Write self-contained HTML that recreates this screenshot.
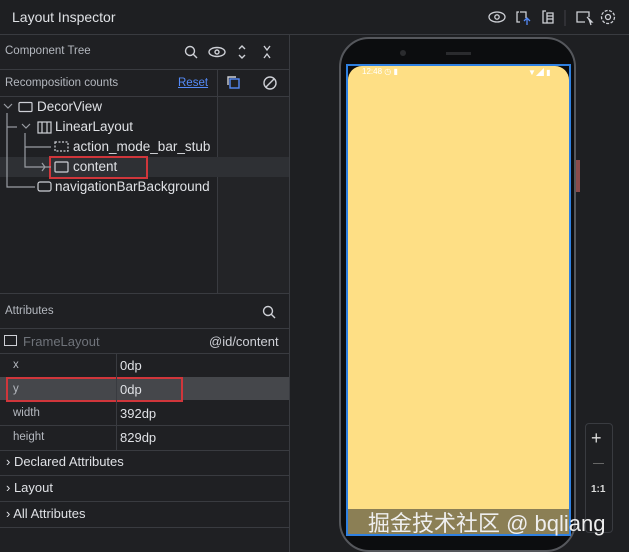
<!DOCTYPE html>
<html><head><meta charset="utf-8"><style>
*{margin:0;padding:0;box-sizing:border-box}
body{width:629px;height:552px;overflow:hidden;background:#1e1f22;font-family:"Liberation Sans","Noto Sans CJK SC",sans-serif;color:#dfe1e5;position:relative}
.a{position:absolute}
.t{font-size:13px;white-space:nowrap}
.tr{font-size:13.5px}
.s{font-size:11.5px;color:#b4b8bf;white-space:nowrap}
.ln{background:#393b40}
</style></head><body>
<div class="a" style="left:0;top:0;width:629px;height:34px;background:#1e1f22"></div>
<div class="a t" style="left:12px;top:9px;font-size:14px">Layout Inspector</div>
<div class="a ln" style="left:0;top:34px;width:629px;height:1px"></div>
<div class="a" style="left:0;top:35px;width:289px;height:517px;background:#1f2023"></div>
<div class="a ln" style="left:289px;top:35px;width:1px;height:517px"></div>
<div class="a s" style="left:5px;top:45px">Component Tree</div>
<svg class="a" style="left:180px;top:42px" width="100" height="20" fill="none" stroke="#ced0d6" stroke-width="1.4">
<circle cx="10" cy="9" r="4.5"/><path d="M13 12l4 4"/>
<ellipse cx="37" cy="10" rx="8" ry="4.5"/><circle cx="37" cy="10" r="2"/>
<path d="M59 7l3-3 3 3M59 13l3 3 3-3"/>
<path d="M84 4l3 4 3-4M84 16l3-4 3 4"/></svg>
<div class="a ln" style="left:0;top:69px;width:289px;height:1px"></div>
<div class="a s" style="left:5px;top:77px">Recomposition counts</div>
<div class="a s" style="left:178px;top:77px;color:#548af7;text-decoration:underline">Reset</div>
<div class="a ln" style="left:217px;top:70px;width:1px;height:223px"></div>
<svg class="a" style="left:225px;top:74px" width="60" height="18" fill="none" stroke-width="1.4">
<rect x="5" y="5" width="9" height="9" stroke="#548af7"/><path d="M3 11V3h8" stroke="#ced0d6"/>
<circle cx="45" cy="9" r="6" stroke="#ced0d6"/><path d="M41 13l8-8" stroke="#ced0d6"/></svg>
<div class="a ln" style="left:0;top:96px;width:289px;height:1px"></div>
<div class="a" style="left:218px;top:97px;width:71px;height:196px;background:#232427"></div>
<div class="a" style="left:0;top:157px;width:289px;height:20px;background:#2e3034"></div>
<div class="a" style="left:49px;top:156px;width:99px;height:23px;border:2px solid #d0363b"></div>
<svg class="a" style="left:0;top:97px" width="60" height="100" fill="none" stroke="#9a9da3" stroke-width="1.2">
<path d="M4 7l4 4 4-4"/><path d="M7 16v74h28"/><path d="M7 30h10"/>
<path d="M22 27l4 4 4-4"/><path d="M25 36v34h26M25 50h26"/><path d="M42 66l3 4-3 4"/>
</svg>
<svg class="a" style="left:18px;top:101px" width="200" height="92" fill="none" stroke="#ced0d6" stroke-width="1.2">
<rect x="1" y="1.5" width="13" height="9" rx="1"/>
<rect x="20" y="21" width="13" height="11"/><path d="M24 21v11M29 21v11"/>
<rect x="37" y="41" width="13" height="9" stroke-dasharray="2 1.5"/>
<rect x="37" y="61" width="13" height="10" rx="1"/>
<rect x="20" y="81" width="13" height="9" rx="2"/></svg>
<div class="a t tr" style="left:37px;top:99px">DecorView</div>
<div class="a t tr" style="left:55px;top:119px">LinearLayout</div>
<div class="a t tr" style="left:73px;top:139px">action_mode_bar_stub</div>
<div class="a t tr" style="left:73px;top:159px">content</div>
<div class="a t tr" style="left:55px;top:179px">navigationBarBackground</div>
<div class="a ln" style="left:0;top:293px;width:289px;height:1px"></div>
<div class="a s" style="left:5px;top:305px">Attributes</div>
<svg class="a" style="left:260px;top:303px" width="18" height="18" fill="none" stroke="#ced0d6" stroke-width="1.4"><circle cx="8" cy="8" r="4.5"/><path d="M11 11l4 4"/></svg>
<div class="a ln" style="left:0;top:328px;width:289px;height:1px"></div>
<div class="a" style="left:4px;top:335px;width:13px;height:11px;border:1.3px solid #ced0d6"></div>
<div class="a t" style="left:23px;top:334px;color:#6f737a">FrameLayout</div>
<div class="a t" style="left:209px;top:334px;color:#ced0d6">@id/content</div>
<div class="a ln" style="left:0;top:353px;width:289px;height:1px"></div>
<div class="a" style="left:0;top:377px;width:289px;height:23px;background:#45474b"></div>
<div class="a" style="left:6px;top:377px;width:177px;height:25px;border:2px solid #d0363b"></div>
<div class="a" style="left:116px;top:354px;width:1px;height:96px;background:#393b40"></div>
<div class="a s" style="left:13px;top:359px">x</div><div class="a t" style="left:120px;top:358px">0dp</div>
<div class="a s" style="left:13px;top:383px">y</div><div class="a t" style="left:120px;top:382px">0dp</div>
<div class="a s" style="left:13px;top:407px">width</div><div class="a t" style="left:120px;top:406px">392dp</div>
<div class="a s" style="left:13px;top:431px">height</div><div class="a t" style="left:120px;top:430px">829dp</div>
<div class="a ln" style="left:0;top:425px;width:289px;height:1px"></div>
<div class="a ln" style="left:0;top:450px;width:289px;height:1px"></div>
<div class="a t" style="left:6px;top:454px">› Declared Attributes</div>
<div class="a ln" style="left:0;top:475px;width:289px;height:1px"></div>
<div class="a t" style="left:6px;top:480px">› Layout</div>
<div class="a ln" style="left:0;top:501px;width:289px;height:1px"></div>
<div class="a t" style="left:6px;top:506px">› All Attributes</div>
<div class="a ln" style="left:0;top:527px;width:289px;height:1px"></div>
<svg class="a" style="left:487px;top:8px" width="135" height="20" fill="none" stroke="#ced0d6" stroke-width="1.3">
<ellipse cx="10" cy="9" rx="8" ry="5"/><circle cx="10" cy="9" r="2.2"/>
<path d="M32 4h-2v10h3M33 4h6v6"/><path d="M40 11v6M37 13l3-3 3 3" stroke="#548af7"/>
<path d="M59 3h-3v12h4M60 5h6v10h-6z"/><path d="M60 8h6M60 11h6"/>
<path d="M78 2v16" stroke="#393b40"/>
<path d="M98 14h-8V4h12v5"/><path d="M100 9l5 5-2 0 1 3" fill="#ced0d6"/>
<circle cx="121" cy="9" r="2.5"/><circle cx="121" cy="9" r="6.5" stroke-dasharray="3 1.5"/></svg>
<div class="a" style="left:339px;top:37px;width:237px;height:515px;border-radius:30px;background:#0c0d0f;border:2px solid #55575c"></div>
<div class="a" style="left:576px;top:160px;width:4px;height:32px;background:#8a4b4b"></div>
<div class="a" style="left:400px;top:50px;width:6px;height:6px;border-radius:3px;background:#2a2b2e"></div>
<div class="a" style="left:446px;top:52px;width:25px;height:3px;background:#2a2b2e"></div>
<div class="a" style="left:346px;top:64px;width:225px;height:472px;border:2px solid #2f80e0"></div>
<div class="a" style="left:348px;top:66px;width:221px;height:468px;background:#fedf85;border-radius:14px 14px 10px 10px"></div>
<div class="a" style="left:362px;top:67px;font-size:8px;color:#fff">12:48 ◷ ▮</div>
<div class="a" style="left:528px;top:67px;font-size:8px;color:#fff">▼◢ ▮</div>
<div class="a" style="left:348px;top:509px;width:221px;height:25px;background:#8b7f55"></div>
<div class="a" style="left:585px;top:423px;width:28px;height:110px;border:1px solid #393b40;border-radius:4px;background:#1e1f22"></div>
<div class="a" style="left:591px;top:428px;font-size:18px;color:#ddd">+</div>
<div class="a" style="left:593px;top:463px;width:11px;height:1px;background:#666"></div>
<div class="a" style="left:591px;top:484px;font-size:10px;font-weight:bold;color:#ddd">1:1</div>
<div class="a" style="left:368px;top:506px;font-size:22px;color:#eee;white-space:nowrap">掘金技术社区 @ bqliang</div>
</body></html>
